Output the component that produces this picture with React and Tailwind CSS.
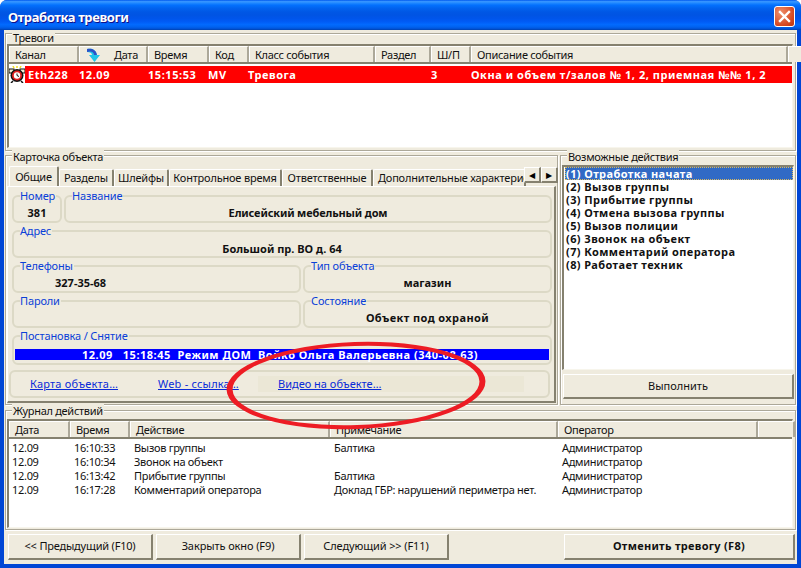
const etched = "border border-[#aca899] shadow-[inset_1px_1px_0_#fff,1px_1px_0_#fff]";
const raised =
	"border-t border-l border-t-white border-l-white border-b-2 border-r-2 border-b-[#85816f] border-r-[#85816f] bg-[#efebde]";

const alarmColumns = [
	{ w: 70, label: "Канал" },
	{ w: 69, label: "Дата", arrow: true },
	{ w: 61, label: "Время" },
	{ w: 40, label: "Код" },
	{ w: 126, label: "Класс события" },
	{ w: 56, label: "Раздел" },
	{ w: 40, label: "Ш/П" },
	{ w: 317, label: "Описание события" },
	{ w: 7, label: "" },
];

const logColumns = [
	{ w: 61, label: "Дата" },
	{ w: 60, label: "Время" },
	{ w: 200, label: "Действие" },
	{ w: 228, label: "Примечание" },
	{ w: 200, label: "Оператор" },
	{ w: 37, label: "" },
];

const logRows = [
	["12.09", "16:10:33", "Вызов группы", "Балтика", "Администратор"],
	["12.09", "16:10:34", "Звонок на объект", "", "Администратор"],
	["12.09", "16:13:42", "Прибытие группы", "Балтика", "Администратор"],
	["12.09", "16:17:28", "Комментарий оператора", "Доклад ГБР: нарушений периметра нет.", "Администратор"],
];

const actions = [
	"(1) Отработка начата",
	"(2) Вызов группы",
	"(3) Прибытие группы",
	"(4) Отмена вызова группы",
	"(5) Вызов полиции",
	"(6) Звонок на объект",
	"(7) Комментарий оператора",
	"(8) Работает техник",
];

const tabs = [
	{ w: 50, label: "Общие", active: true },
	{ w: 55, label: "Разделы" },
	{ w: 55, label: "Шлейфы" },
	{ w: 113, label: "Контрольное время" },
	{ w: 91, label: "Ответственные" },
	{ w: 153, label: "Дополнительные характеристики", clipped: true },
];

function GroupBox({ label, labelClass = "top-[-6px]", className, children }) {
	return (
		<div className={`relative ${etched} ${className}`}>
			<span className={`absolute left-[6px] bg-[#efebde] px-[1px] text-[11px] leading-[13px] tracking-[-0.3px] text-[#111] ${labelClass}`}>
				{label}
			</span>
			{children}
		</div>
	);
}

function Field({ label, className, children }) {
	return (
		<div className={`relative rounded-[6px] border-2 border-[#dcd9c6] ${className}`}>
			<span className="absolute left-[6px] top-[-8px] bg-[#efebde] pr-[1px] text-[11px] leading-[13px] tracking-[-0.15px] text-[#0a3fd8]">
				{label}
			</span>
			{children}
		</div>
	);
}

function Header({ columns }) {
	return (
		<div className="flex h-[18px] border-b-2 border-b-[#85816f]">
			{columns.map((col, i) => (
				<div
					key={i}
					style={{ width: col.w }}
					className="flex shrink-0 items-center justify-between overflow-hidden border-l border-t border-l-white border-t-white border-r-2 border-r-[#aca899] bg-[#efebde] pl-[5px] pr-[8px] pt-[1px] text-[11px] leading-[14px] tracking-[-0.3px] text-[#111]"
				>
					{col.arrow && <SortArrow />}
					<span className="whitespace-nowrap">{col.label}</span>
				</div>
			))}
		</div>
	);
}

function SortArrow() {
	return (
		<svg width="16" height="15" viewBox="0 0 16 15" className="ml-[1px] shrink-0">
			<path d="M1 1 C5 0 10 1 11 7 L14 7 L8.5 14 L3 7 L6 7 C6 5 4 4 1 4 Z" fill="#1fc6e8" />
			<path d="M1 1 C5 0 10 1 11 7 L8 7 C8 4 5 2.5 1 4 Z" fill="#2a52c8" />
		</svg>
	);
}

function AlarmIcon() {
	return (
		<svg width="16" height="17" viewBox="0 0 16 17" className="shrink-0">
			<path d="M4 0 L5 2 M8 0 L8 2 M12 0 L11 2" stroke="#f4e020" strokeWidth="1.5" />
			<rect x="0" y="3" width="5" height="4" fill="#f2efd8" stroke="#111" strokeWidth="1" />
			<rect x="11" y="3" width="5" height="4" fill="#f2efd8" stroke="#111" strokeWidth="1" />
			<circle cx="8" cy="9.5" r="6.5" fill="#111" />
			<circle cx="8" cy="9.5" r="5" fill="#e02020" />
			<circle cx="8" cy="9.5" r="3.2" fill="#fff" />
			<path d="M8 7.5 L8 9.5 L10 10.5" stroke="#111" strokeWidth="1" fill="none" />
			<path d="M2 17 L4 15 M14 17 L12 15" stroke="#111" strokeWidth="1.5" />
		</svg>
	);
}

function Sunken({ className, children }) {
	return (
		<div className={`border-l-2 border-t-2 border-l-[#85816f] border-t-[#85816f] border-r border-b border-r-[#f7f5ec] border-b-[#f7f5ec] bg-white ${className}`}>
			{children}
		</div>
	);
}

function FooterButton({ className, children }) {
	return (
		<button className={`flex h-[26px] items-center justify-center text-[11px] text-[#111] ${raised} ${className}`}>
			{children}
		</button>
	);
}

export default function App() {
	return (
		<div className="relative flex h-[568px] w-[801px] flex-col overflow-hidden rounded-t-[7px] bg-[#0046d5] font-['Noto_Sans','DejaVu_Sans',sans-serif]">
			{/* TITLE BAR */}
			<div className="flex h-[30px] shrink-0 items-center justify-between bg-[linear-gradient(180deg,#0058ee_0%,#3593ff_5%,#288eff_9%,#127dff_13%,#036ffc_18%,#0262ee_28%,#0057e5_40%,#0054e3_50%,#0055eb_62%,#005bf5_72%,#026afe_82%,#0062ef_90%,#0052d6_96%,#0040ab_100%)] pl-[8px] pr-[6px]">
				<span className="pt-[5px] text-[13px] font-bold tracking-[-0.4px] text-white [text-shadow:1px_1px_0_#0f1089]">Отработка тревоги</span>
				<button className="mt-[3px] flex h-[21px] w-[21px] items-center justify-center rounded-[3px] border border-white bg-[radial-gradient(circle_at_30%_30%,#ef8f6c,#d5461f_70%,#b8350f)]">
					<svg width="13" height="13" viewBox="0 0 13 13">
						<path d="M2 2 L11 11 M11 2 L2 11" stroke="#fff" strokeWidth="2.4" strokeLinecap="square" />
					</svg>
				</button>
			</div>

			{/* BODY */}
			<div className="mx-[4px] mb-[4px] flex flex-1 flex-col bg-[#efebde] pl-[1px] pr-[1px] pt-[3px]">
				{/* Тревоги */}
				<GroupBox label="Тревоги" labelClass="top-[-3px]" className="h-[118px] pl-[1px] pr-[2px] pt-[10px]">
					<Sunken className="h-[104px]">
						<Header columns={alarmColumns} />
						<div className="mt-[2px] flex h-[17px] items-center">
							<AlarmIcon />
							<div className="flex h-[17px] w-[770px] items-center bg-[#ff0000] text-[11px] font-bold leading-[17px] tracking-[0.55px] text-white">
								<span className="w-[54px] shrink-0 pl-[3px]">Eth228</span>
								<span className="w-[69px] shrink-0">12.09</span>
								<span className="w-[60px] shrink-0">15:15:53</span>
								<span className="w-[40px] shrink-0">MV</span>
								<span className="w-[126px] shrink-0">Тревога</span>
								<span className="w-[97px] shrink-0 pl-[57px]">3</span>
								<span className="whitespace-nowrap">Окна и объем т/залов № 1, 2, приемная №№ 1, 2</span>
							</div>
						</div>
					</Sunken>
				</GroupBox>

				{/* Карточка + действия */}
				<div className="mt-[4px] flex h-[250px] gap-[2px]">
					<GroupBox label="Карточка объекта" className="w-[553px] pl-[1px] pr-[1px] pt-[10px]">
						<div className="relative flex h-[20px] items-end pl-[2px]">
							{tabs.map((tab) => (
								<div
									key={tab.label}
									style={{ width: tab.w }}
									className={`flex shrink-0 items-center overflow-hidden whitespace-nowrap rounded-t-[2px] border-l border-t border-l-white border-t-white border-r-2 border-r-[#85816f] text-[11px] leading-[14px] tracking-[-0.2px] text-[#111] ${
										tab.active ? "h-[20px]" : "h-[17px]"
									} ${tab.clipped ? "justify-start pl-[4px]" : "justify-center"}`}
								>
									{tab.label}
								</div>
							))}
							<div className="absolute right-[-2px] top-[1px] flex">
								<button className={`flex h-[16px] w-[17px] items-center justify-center text-[8px] text-black ${raised}`}>◀</button>
								<button className={`flex h-[16px] w-[17px] items-center justify-center text-[8px] text-black ${raised}`}>▶</button>
							</div>
						</div>
						<div className="flex h-[217px] w-[549px] flex-col border-l border-l-white border-t border-t-white border-r-2 border-r-[#85816f] border-b-2 border-b-[#85816f] pl-[4px] pr-[2px] pt-[8px]">
							<div className="flex h-[28px] gap-[2px]">
								<Field label="Номер" className="flex w-[50px] items-center justify-center pt-[9px]">
									<b className="text-[11px] text-[#111]">381</b>
								</Field>
								<Field label="Название" className="flex flex-1 items-center justify-center pt-[9px]">
									<b className="text-[11px] tracking-[-0.15px] text-[#111]">Елисейский мебельный дом</b>
								</Field>
							</div>
							<Field label="Адрес" className="mt-[7px] flex h-[28px] items-center justify-center pt-[10px]">
								<b className="text-[11px] text-[#111]">Большой пр. ВО д. 64</b>
							</Field>
							<div className="mt-[7px] flex h-[28px] gap-[2px]">
								<Field label="Телефоны" className="flex w-[289px] items-center pl-[41px] pt-[9px]">
									<b className="text-[11px] text-[#111]">327-35-68</b>
								</Field>
								<Field label="Тип объекта" className="flex flex-1 items-center justify-center pt-[9px]">
									<b className="text-[11px] text-[#111]">магазин</b>
								</Field>
							</div>
							<div className="mt-[7px] flex h-[28px] gap-[2px]">
								<Field label="Пароли" className="w-[289px]" />
								<Field label="Состояние" className="flex flex-1 items-center justify-center pt-[9px]">
									<b className="text-[11px] tracking-[0.4px] text-[#111]">Объект под охраной</b>
								</Field>
							</div>
							<Field label="Постановка / Снятие" className="mt-[7px] h-[30px] px-[1px] pt-[12px]">
								<div className="flex h-[11px] items-center justify-center whitespace-nowrap bg-[#0000ff] pr-[4px] text-[11px] font-bold leading-[11px] tracking-[0.5px] text-white">
									12.09&nbsp;&nbsp;&nbsp;15:18:45&nbsp;&nbsp;Режим ДОМ&nbsp;&nbsp;Войко Ольга Валерьевна (340-08-63)
								</div>
							</Field>
							<div className="-ml-[3px] mt-[5px] flex h-[28px] w-[541px] items-center rounded-[6px] border-2 border-[#dcd9c6] text-[11px] text-[#0a2bd8] underline">
								<span className="ml-[19px] w-[128px] shrink-0 tracking-[0.2px]">Карта объекта…</span>
								<span className="w-[100px] shrink-0 tracking-[0.2px]">Web - ссылка…</span>
								<span className="flex h-[16px] w-[266px] items-center bg-[#ebe7d6] pl-[20px]">Видео на объекте…</span>
							</div>
						</div>
					</GroupBox>

					<GroupBox label="Возможные действия" className="flex-1 pl-[1px] pr-[1px] pt-[9px]">
						<Sunken className="h-[205px] pl-[1px]">
							{actions.map((action, i) => (
								<div
									key={action}
									className={`h-[13px] pl-[1px] text-[11px] font-bold leading-[13px] tracking-[0.4px] ${
										i === 0
											? "bg-[#316ac5] text-white outline-1 -outline-offset-1 outline-dotted outline-[#d8b860]"
											: "text-[#111]"
									}`}
								>
									{action}
								</div>
							))}
						</Sunken>
						<button className={`ml-[1px] mt-[4px] flex h-[25px] w-[231px] items-center justify-center text-[11px] text-[#111] ${raised}`}>
							Выполнить
						</button>
					</GroupBox>
				</div>

				{/* Журнал действий */}
				<GroupBox label="Журнал действий" labelClass="top-[-7px]" className="mt-[5px] h-[120px] pl-[1px] pr-[2px] pt-[8px]">
					<Sunken className="h-[109px]">
						<Header columns={logColumns} />
						<div className="pt-[2px]">
							{logRows.map((row, i) => (
								<div key={i} className="flex h-[14px] text-[11px] leading-[14px] tracking-[-0.3px] text-[#111]">
									<span className="w-[60px] shrink-0 pl-[3px]">{row[0]}</span>
									<span className="w-[60px] shrink-0 pl-[5px]">{row[1]}</span>
									<span className="w-[200px] shrink-0 pl-[5px]">{row[2]}</span>
									<span className="w-[228px] shrink-0 whitespace-nowrap pl-[5px]">{row[3]}</span>
									<span className="pl-[5px]">{row[4]}</span>
								</div>
							))}
						</div>
					</Sunken>
				</GroupBox>

				{/* Нижние кнопки */}
				<div className="mt-[4px] flex pl-[3px]">
					<div className="flex gap-[3px]">
						<FooterButton className="w-[145px] tracking-[-0.2px]">{"<< Предыдущий (F10)"}</FooterButton>
						<FooterButton className="w-[145px] tracking-[-0.1px]">Закрыть окно (F9)</FooterButton>
						<FooterButton className="w-[145px] tracking-[-0.1px]">{"Следующий >> (F11)"}</FooterButton>
					</div>
					<FooterButton className="ml-[115px] w-[231px] font-bold tracking-[0.3px]">Отменить тревогу (F8)</FooterButton>
				</div>
			</div>

			{/* red marker drawn over the screenshot */}
			<svg width="801" height="568" className="pointer-events-none absolute left-0 top-0">
				<path
					transform="rotate(-2 356 385.5)"
					fillRule="evenodd"
					fill="#ed1c24"
					d="M226.5 385.5 A129.5 43.5 0 1 1 485.5 385.5 A129.5 43.5 0 1 1 226.5 385.5 Z M232.5 385.5 A123.5 39.5 0 1 0 479.5 385.5 A123.5 39.5 0 1 0 232.5 385.5 Z"
				/>
			</svg>
		</div>
	);
}
